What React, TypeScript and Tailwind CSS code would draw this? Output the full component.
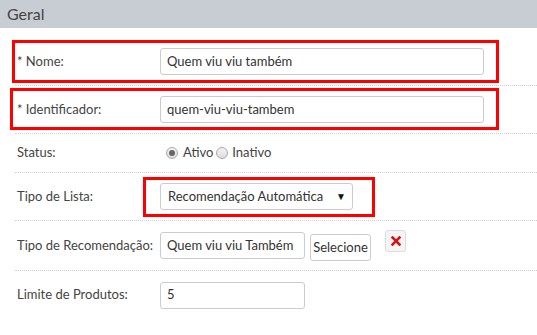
import React from "react";

const font = { fontFamily: "Lato, 'Open Sans', sans-serif" };

function Row({
  label,
  height,
  children,
  last,
}: {
  label: string;
  height: string;
  children: React.ReactNode;
  last?: boolean;
}) {
  return (
    <div
      className={`relative ml-[15px] flex items-center ${height} ${
        last ? "" : "border-b border-dotted border-[#cfcfcf]"
      }`}
    >
      <div className="w-[145px] shrink-0 pl-[2px] text-[13px] text-[#444]">{label}</div>
      {children}
    </div>
  );
}

function TextInput({ value, width }: { value: string; width: string }) {
  return (
    <div
      className={`flex h-[27px] ${width} items-center rounded-[3px] border border-[#ccc] bg-white px-[6px] text-[13px] text-[#333]`}
    >
      {value}
    </div>
  );
}

function Radio({ checked }: { checked?: boolean }) {
  return (
    <span className="flex h-[12px] w-[12px] items-center justify-center rounded-full border border-[#aaa] bg-gradient-to-b from-[#f4f4f4] to-[#dcdcdc]">
      {checked && <span className="h-[6px] w-[6px] rounded-full bg-[#666]" />}
    </span>
  );
}

export default function App() {
  return (
    <div className="h-[335px] w-[537px] overflow-hidden bg-white" style={font}>
      <div className="flex h-[28px] items-center bg-[#c8cdd4] px-[7px] text-[16px] text-[#444]">
        Geral
      </div>

      <div className="pt-[10px]">
        {/* Nome */}
        <Row label="* Nome:" height="h-[48px]">
          <TextInput value="Quem viu viu também" width="w-[324px]" />
          <div className="pointer-events-none absolute left-[-3px] top-[2px] h-[43px] w-[487px] border-[3px] border-[#ff0000]" />
        </Row>

        {/* Identificador */}
        <Row label="* Identificador:" height="h-[48px]">
          <TextInput value="quem-viu-viu-tambem" width="w-[324px]" />
          <div className="pointer-events-none absolute left-[-5px] top-[2px] h-[42px] w-[489px] border-[3px] border-[#ff0000]" />
        </Row>

        {/* Status */}
        <Row label="Status:" height="h-[39px]">
          <div className="flex items-center pl-[6px] text-[13px] text-[#444]">
            <Radio checked />
            <span className="ml-[5px] mr-[3px]">Ativo</span>
            <Radio />
            <span className="ml-[4px]">Inativo</span>
          </div>
        </Row>

        {/* Tipo de Lista */}
        <Row label="Tipo de Lista:" height="h-[48px]">
          <div className="flex h-[27px] w-[193px] items-center justify-between rounded-[3px] border border-[#ccc] bg-white pl-[7px] pr-[6px] text-[13px] text-[#333]">
            <span>Recomendação Automática</span>
            <span className="text-[10px] text-[#111]">▼</span>
          </div>
          <div className="pointer-events-none absolute left-[128px] top-[4px] h-[40px] w-[232px] border-[3px] border-[#ff0000]" />
        </Row>

        {/* Tipo de Recomendação */}
        <Row label="Tipo de Recomendação:" height="h-[50px]">
          <div className="flex items-start self-start pt-[11px]">
            <TextInput value="Quem viu viu Também" width="w-[145px]" />
            <div className="ml-[5px] mt-[2px] flex h-[27px] w-[61px] items-center justify-center rounded-[3px] border border-[#ccc] bg-white text-[13px] text-[#333]">
              Selecione
            </div>
            <div className="ml-[14px] mt-[-2px] flex h-[22px] w-[21px] items-center justify-center rounded-[3px] border border-[#ddd] bg-[#f5f5f5]">
              <svg width="10" height="10" viewBox="0 0 10 10">
                <path d="M1.5 1.5 L8.5 8.5 M8.5 1.5 L1.5 8.5" stroke="#d0161c" strokeWidth="2.6" strokeLinecap="square" />
              </svg>
            </div>
          </div>
        </Row>

        {/* Limite de Produtos */}
        <Row label="Limite de Produtos:" height="h-[48px]" last>
          <TextInput value="5" width="w-[145px]" />
        </Row>
      </div>
    </div>
  );
}
